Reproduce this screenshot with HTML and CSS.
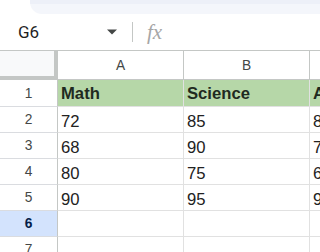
FILE: index.html
```html
<!DOCTYPE html>
<html>
<head>
<meta charset="utf-8">
<link rel="stylesheet" href="styles.css">
</head>
<body>
<div class="app">
  <div class="topbar"><div class="topbar-fill"></div></div>
  <div class="formula">
    <div class="namebox">
      <span class="cellref">G6</span>
      <svg class="caret" viewBox="0 0 12 6" width="12" height="6"><path d="M1 0.5h10L6 5.5z"/></svg>
    </div>
    <div class="sep"></div>
    <span class="fx">fx</span>
  </div>
  <div class="sheet">
    <div class="corner"></div>
    <div class="colhead">A</div>
    <div class="colhead">B</div>
    <div class="colhead">C</div>

    <div class="rowhead">1</div>
    <div class="cell head">Math</div>
    <div class="cell head">Science</div>
    <div class="cell head">Art</div>

    <div class="rowhead">2</div>
    <div class="cell">72</div>
    <div class="cell">85</div>
    <div class="cell">88</div>

    <div class="rowhead">3</div>
    <div class="cell">68</div>
    <div class="cell">90</div>
    <div class="cell">78</div>

    <div class="rowhead">4</div>
    <div class="cell">80</div>
    <div class="cell">75</div>
    <div class="cell">65</div>

    <div class="rowhead">5</div>
    <div class="cell">90</div>
    <div class="cell">95</div>
    <div class="cell">92</div>

    <div class="rowhead selected">6</div>
    <div class="cell"></div>
    <div class="cell"></div>
    <div class="cell"></div>

    <div class="rowhead">7</div>
    <div class="cell"></div>
    <div class="cell"></div>
    <div class="cell"></div>
  </div>
</div>
</body>
</html>
```

FILE: styles.css
```css
html, body {
  margin: 0;
  padding: 0;
  background: #ffffff;
}
.app {
  width: 320px;
  height: 252px;
  overflow: hidden;
  font-family: "Liberation Sans", Arial, sans-serif;
}
.topbar {
  height: 14px;
  display: flex;
}
.topbar-fill {
  flex: 1;
  margin-left: 30px;
  background: #f4f6fb;
  border-top: 4px solid #edf0f8;
  border-bottom-left-radius: 12px;
}
.formula {
  height: 36px;
  display: flex;
  align-items: center;
}
.namebox {
  width: 132px;
  box-sizing: border-box;
  padding: 0 14px 0 18px;
  display: flex;
  align-items: center;
}
.cellref {
  font-family: Roboto, "Liberation Sans", sans-serif;
  font-size: 17px;
  color: #1f1f1f;
}
.caret {
  margin-left: auto;
  fill: #444746;
}
.sep {
  width: 1px;
  height: 20px;
  background: #c4c7c5;
}
.fx {
  margin-left: 14px;
  font-family: "Liberation Serif", serif;
  font-style: italic;
  font-size: 21px;
  color: #a6a6a6;
  line-height: 1;
}
.sheet {
  border-top: 1px solid #c4c7c5;
  display: grid;
  width: 436px;
  grid-template-columns: 58px 126px 126px 126px;
  grid-template-rows: 29px 27px repeat(6, 26px);
}
.corner {
  background: #f8f9fa;
  border-right: 4px solid #c4c7c5;
  border-bottom: 4px solid #c4c7c5;
}
.colhead {
  border-right: 1px solid #c4c7c5;
  border-bottom: 1px solid #c4c7c5;
  display: flex;
  align-items: center;
  justify-content: center;
  font-size: 13.75px;
  color: #444746;
}
.rowhead {
  border-right: 1px solid #c4c7c5;
  border-bottom: 1px solid #dadce0;
  display: flex;
  align-items: center;
  justify-content: center;
  font-size: 13.75px;
  color: #444746;
}
.rowhead.selected {
  background: #d3e3fd;
  color: #041e49;
  font-weight: bold;
}
.cell {
  border-right: 1px solid #e1e1e1;
  border-bottom: 1px solid #e1e1e1;
  display: flex;
  align-items: flex-end;
  padding: 0 3px 1px 3px;
  font-size: 16.67px;
  line-height: 19px;
  color: #222222;
  white-space: nowrap;
  overflow: hidden;
}
.cell.head {
  background: #b6d7a8;
  font-weight: bold;
  color: #1f2a1f;
  padding-bottom: 3px;
}
```
